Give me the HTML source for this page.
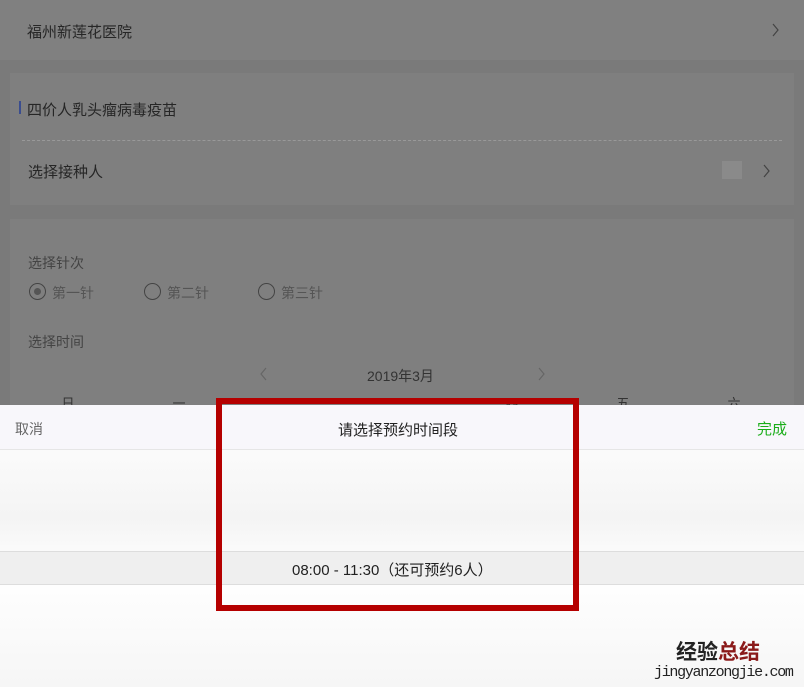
<html><head><style>
body{margin:0;width:804px;height:687px;overflow:hidden;background:#7a7a7a;font-family:"Liberation Sans","Noto Sans CJK SC",sans-serif;position:relative}
.a{position:absolute}
.t{color:#262626;font-size:15px}
.g{color:#444;font-size:14px}
.w{position:absolute;top:393px;font-size:13px;color:#333;width:30px;text-align:center}
</style></head><body>
<div class="a" style="left:0;top:0;width:804px;height:60px;background:#808080"></div>
<div class="a t" style="left:27px;top:21px">福州新莲花医院</div>
<svg class="a" style="left:772px;top:23px" width="8" height="14"><path d="M1 1L6 7L1 13" stroke="#444" fill="none" stroke-width="1.2"/></svg>
<div class="a" style="left:10px;top:73px;width:784px;height:132px;background:#7f7f7f"></div>
<div class="a" style="left:19px;top:101px;width:2px;height:13px;background:#3a4d8f"></div>
<div class="a t" style="left:27px;top:99px">四价人乳头瘤病毒疫苗</div>
<div class="a" style="left:22px;top:140px;width:760px;border-top:1px dashed #999"></div>
<div class="a t" style="left:28px;top:161px">选择接种人</div>
<div class="a" style="left:722px;top:161px;width:20px;height:18px;background:#8a8a8a"></div>
<svg class="a" style="left:763px;top:164px" width="8" height="14"><path d="M1 1L6 7L1 13" stroke="#444" fill="none" stroke-width="1.2"/></svg>
<div class="a" style="left:10px;top:219px;width:784px;height:200px;background:#7f7f7f"></div>
<div class="a g" style="left:28px;top:253px">选择针次</div>
<div class="a" style="left:29px;top:283px;width:15px;height:15px;border:1px solid #444;border-radius:50%"></div>
<div class="a" style="left:34px;top:288px;width:7px;height:7px;background:#555;border-radius:50%"></div>
<div class="a g" style="left:52px;top:283px;color:#555">第一针</div>
<div class="a" style="left:144px;top:283px;width:15px;height:15px;border:1px solid #444;border-radius:50%"></div>
<div class="a g" style="left:167px;top:283px;color:#555">第二针</div>
<div class="a" style="left:258px;top:283px;width:15px;height:15px;border:1px solid #444;border-radius:50%"></div>
<div class="a g" style="left:281px;top:283px;color:#555">第三针</div>
<div class="a g" style="left:28px;top:332px">选择时间</div>
<svg class="a" style="left:260px;top:367px" width="8" height="14"><path d="M6 1L1 7L6 13" stroke="#666" fill="none" stroke-width="1.2"/></svg>
<div class="a g" style="left:367px;top:366px;color:#333">2019年3月</div>
<svg class="a" style="left:538px;top:367px" width="8" height="14"><path d="M1 1L6 7L1 13" stroke="#666" fill="none" stroke-width="1.2"/></svg>
<div class="w" style="left:53px">日</div><div class="w" style="left:164px">一</div><div class="w" style="left:275px">二</div><div class="w" style="left:386px">三</div><div class="w" style="left:497px">四</div><div class="w" style="left:608px">五</div><div class="w" style="left:719px">六</div>
<div class="a" style="left:0;top:405px;width:804px;height:282px;background:linear-gradient(#fff,#f4f4f4 40%,#fff 60%,#f6f6f6)"></div>
<div class="a" style="left:0;top:405px;width:804px;height:44px;background:#f8f7fb;border-bottom:1px solid #e6e6e6"></div>
<div class="a" style="left:15px;top:419px;font-size:14px;color:#666">取消</div>
<div class="a" style="left:338px;top:419px;font-size:15px;color:#222">请选择预约时间段</div>
<div class="a" style="left:757px;top:418px;font-size:15px;color:#1aad19">完成</div>
<div class="a" style="left:0;top:551px;width:804px;height:32px;background:#efefef;border-top:1px solid #ddd;border-bottom:1px solid #ddd"></div>
<div class="a" style="left:292px;top:559px;font-size:15px;color:#222">08:00 - 11:30（还可预约6人）</div>
<div class="a" style="left:216px;top:398px;width:351px;height:201px;border:6px solid #b50000"></div>
<div class="a" style="left:676px;top:636px;font-size:21px;font-weight:bold;color:#222">经验<span style="color:#8b1a1a">总结</span></div>
<div class="a" style="left:654px;top:664px;font-size:15px;color:#222;font-family:'Liberation Mono',monospace;letter-spacing:-1.3px">jingyanzongjie.com</div>
</body></html>
